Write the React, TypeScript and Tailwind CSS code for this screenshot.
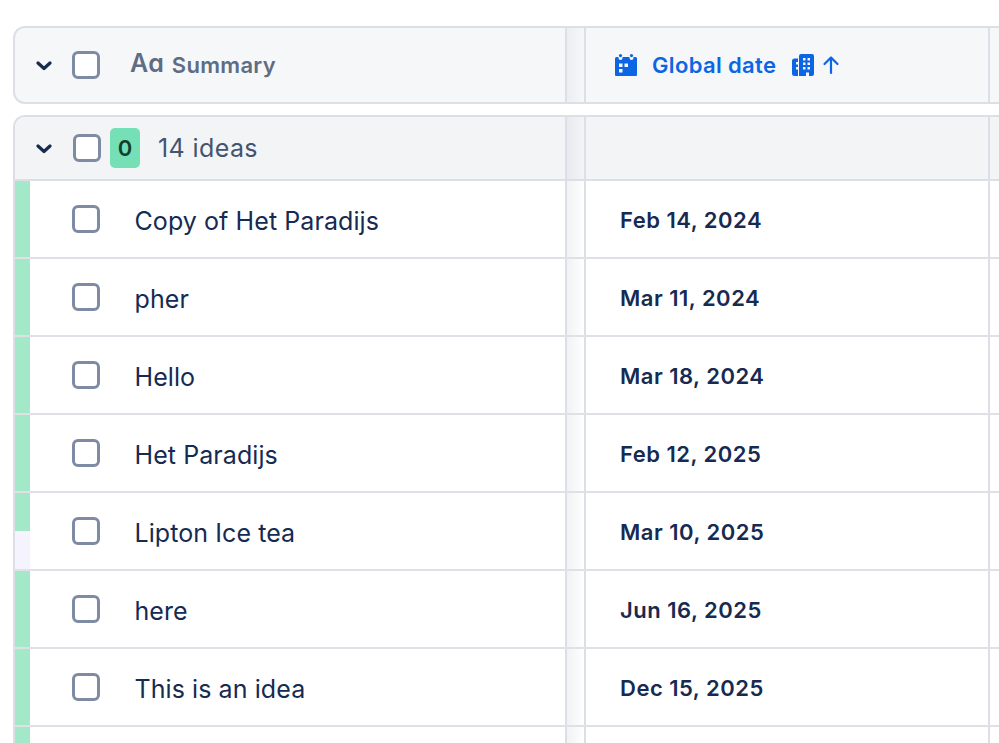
const rows = [
  { name: 'Copy of Het Paradijs', date: 'Feb 14, 2024' },
  { name: 'pher', date: 'Mar 11, 2024' },
  { name: 'Hello', date: 'Mar 18, 2024' },
  { name: 'Het Paradijs', date: 'Feb 12, 2025' },
  { name: 'Lipton Ice tea', date: 'Mar 10, 2025', half: true },
  { name: 'here', date: 'Jun 16, 2025' },
  { name: 'This is an idea', date: 'Dec 15, 2025' },
  { name: '', date: '' },
];

function Chevron() {
  return (
    <svg width="16" height="10" viewBox="0 0 16 10" className="block">
      <path d="M2 2 L8 7.5 L14 2" fill="none" stroke="#172b4d" strokeWidth="3.2" strokeLinecap="round" strokeLinejoin="round" />
    </svg>
  );
}

function Checkbox({ className }: { className: string }) {
  return <div className={`h-[28px] w-[28px] shrink-0 rounded-[6px] border-[3px] border-[#7f8ba3] bg-white ${className}`} />;
}

function CalendarIcon() {
  return (
    <svg width="24" height="24" viewBox="0 0 24 24" className="block shrink-0">
      <path
        fillRule="evenodd"
        fill="#0c66e4"
        d="M1 5.5 Q1 4 2.5 4 H4.5 V5 A2 2 0 0 0 8.5 5 V4 H15.5 V5 A2 2 0 0 0 19.5 5 V4 H21.5 Q23 4 23 5.5 V22 Q23 23 22 23 H2 Q1 23 1 22 Z M5 10.5 V14 H8.5 V10.5 Z M10.5 10.5 V14 H14 V10.5 Z M5 16 V19.5 H8.5 V16 Z"
      />
      <circle cx="6.5" cy="2.6" r="1.6" fill="#0c66e4" />
      <circle cx="17.5" cy="2.6" r="1.6" fill="#0c66e4" />
    </svg>
  );
}

function BuildingIcon() {
  return (
    <svg width="24" height="24" viewBox="0 0 24 24" className="block shrink-0">
      <path
        fillRule="evenodd"
        fill="#0c66e4"
        d="M7 5.5 V23 H3.5 Q1 23 1 20.5 V8 Q1 5.5 3.5 5.5 Z M5 9 V11.5 H7 V9 Z M5 14 V16.5 H7 V14 Z"
      />
      <path
        fillRule="evenodd"
        fill="#0c66e4"
        d="M10 1 H21 Q23 1 23 3 V21 Q23 23 21 23 H18 V19.5 H15 V23 H8 V3 Q8 1 10 1 Z M12 5 V7.5 H14.5 V5 Z M16.5 5 V7.5 H19 V5 Z M12 9.5 V12 H14.5 V9.5 Z M16.5 9.5 V12 H19 V9.5 Z M12 14 V16.5 H14.5 V14 Z M16.5 14 V16.5 H19 V14 Z"
      />
    </svg>
  );
}

function ArrowUp() {
  return (
    <svg width="18" height="20" viewBox="0 0 18 20" className="block shrink-0">
      <path d="M9 18 V3 M2.5 9 L9 2.5 L15.5 9" fill="none" stroke="#0c66e4" strokeWidth="2.2" strokeLinecap="round" strokeLinejoin="round" />
    </svg>
  );
}

function Divider({ shade }: { shade: string }) {
  return (
    <div className={`flex h-full w-[21px] shrink-0 border-x-2 border-[#dcdfe6] bg-gradient-to-r ${shade} to-transparent`} />
  );
}

export default function App() {
  return (
    <div className="h-[743px] w-[999px] overflow-hidden bg-white pl-[13px] pt-[26px] font-['Inter',sans-serif]">
      <div className="flex h-[78px] w-[1100px] rounded-l-[12px] border-2 border-r-0 border-[#dcdfe6] bg-[#f6f7f9]">
        <div className="flex w-[550px] shrink-0 items-center">
          <div className="ml-[21px] mt-[1px]"><Chevron /></div>
          <Checkbox className="ml-[20px]" />
          <span className="ml-[30px] -mt-[4px] text-[25px] leading-none font-semibold text-[#5e6c84]">Aɑ</span>
          <span className="ml-[8px] text-[22px] font-semibold leading-none tracking-[0.3px] text-[#5e6c84]">Summary</span>
        </div>
        <Divider shade="from-[#eceef2]" />
        <div className="flex w-[402px] shrink-0 items-center pl-[28px]">
          <CalendarIcon />
          <span className="ml-[14px] text-[22px] font-semibold leading-none tracking-[0.35px] text-[#0c66e4]">Global date</span>
          <span className="ml-[15px]"><BuildingIcon /></span>
          <span className="ml-[7px]"><ArrowUp /></span>
        </div>
        <div className="h-full w-[2px] shrink-0 bg-[#dcdfe6]" />
      </div>

      <div className="mt-[11px] w-[1100px] rounded-l-[12px] border-2 border-b-0 border-r-0 border-[#dcdfe6]">
        <div className="flex h-[64px] rounded-tl-[10px] border-b-2 border-[#dcdfe6] bg-[#f3f4f6]">
          <div className="flex w-[550px] shrink-0 items-center">
            <div className="ml-[21px] mt-[1px]"><Chevron /></div>
            <Checkbox className="ml-[21px]" />
            <span className="ml-[9px] flex h-[40px] w-[30px] items-center justify-center rounded-[5px] bg-[#75e0b5] text-[22px] font-semibold leading-none text-[#133f2d]">0</span>
            <span className="ml-[18px] text-[25px] leading-none tracking-[0.4px] text-[#44546f]">14 ideas</span>
          </div>
          <Divider shade="from-[#e9eaef]" />
          <div className="w-[402px] shrink-0" />
          <div className="h-full w-[2px] shrink-0 bg-[#dcdfe6]" />
        </div>

        {rows.map((row, i) => (
          <div key={i} className="flex h-[78px] border-b-2 border-[#dfe1e7] bg-white">
            <div className="flex h-full w-[15px] shrink-0 flex-col bg-[#a3e8c8]">
              {row.half && <div className="mt-auto h-[38px] bg-[#f5f3fe]" />}
            </div>
            <div className="flex w-[535px] shrink-0 items-center">
              <Checkbox className="ml-[42px]" />
              <span className="ml-[34.5px] mt-[4px] text-[25px] leading-none tracking-[0.08px] text-[#162a52]">{row.name}</span>
            </div>
            <Divider shade="from-[#f1f2f4]" />
            <div className="flex w-[402px] shrink-0 items-center pl-[34px]">
              <span className="mt-[2px] text-[22px] font-semibold leading-none tracking-[0.5px] text-[#162a52]">{row.date}</span>
            </div>
            <div className="h-full w-[2px] shrink-0 bg-[#dcdfe6]" />
          </div>
        ))}
      </div>
    </div>
  );
}
